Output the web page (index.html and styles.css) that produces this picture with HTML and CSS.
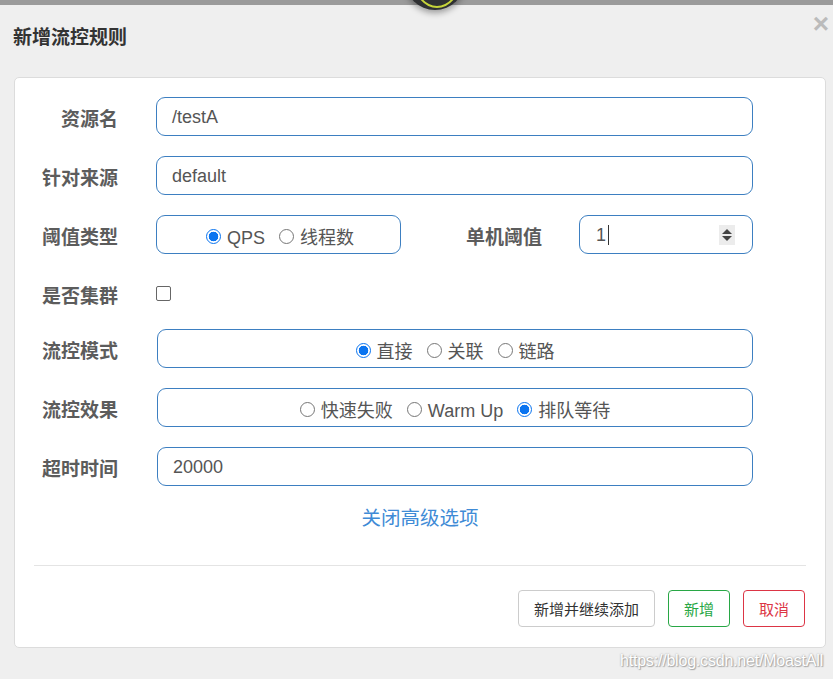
FILE: index.html
```html
<!DOCTYPE html>
<html lang="zh">
<head>
<meta charset="utf-8">
<title>新增流控规则</title>
<link rel="stylesheet" href="styles.css">
</head>
<body>
<div class="topbar"><div class="knob"></div></div>
<div class="header">
  <h4 class="title">新增流控规则</h4>
  <span class="close">×</span>
</div>
<div class="card">
  <form class="form">
    <div class="row">
      <label class="lbl">资源名</label>
      <div class="field"><span class="val">/testA</span></div>
    </div>
    <div class="row">
      <label class="lbl">针对来源</label>
      <div class="field"><span class="val">default</span></div>
    </div>
    <div class="row">
      <label class="lbl">阈值类型</label>
      <div class="split">
        <div class="field radios narrow">
          <span class="opt"><input type="radio" name="t" checked>QPS</span>
          <span class="opt"><input type="radio" name="t">线程数</span>
        </div>
        <label class="lbl lbl2">单机阈值</label>
        <div class="field num">
          <span class="val">1</span><span class="caret"></span>
          <span class="spin"><i class="up"></i><i class="down"></i></span>
        </div>
      </div>
    </div>
    <div class="row row-check">
      <label class="lbl">是否集群</label>
      <div class="checkcell"><input type="checkbox" class="check"></div>
    </div>
    <div class="row">
      <label class="lbl">流控模式</label>
      <div class="field radios shift">
        <span class="opt"><input type="radio" name="m" checked>直接</span>
        <span class="opt"><input type="radio" name="m">关联</span>
        <span class="opt"><input type="radio" name="m">链路</span>
      </div>
    </div>
    <div class="row">
      <label class="lbl">流控效果</label>
      <div class="field radios shift">
        <span class="opt"><input type="radio" name="e">快速失败</span>
        <span class="opt"><input type="radio" name="e">Warm Up</span>
        <span class="opt"><input type="radio" name="e" checked>排队等待</span>
      </div>
    </div>
    <div class="row">
      <label class="lbl">超时时间</label>
      <div class="field shift"><span class="val">20000</span></div>
    </div>
    <div class="linkrow"><a class="link">关闭高级选项</a></div>
  </form>
  <div class="divider"></div>
  <div class="footer">
    <button class="btn btn-default" type="button">新增并继续添加</button>
    <button class="btn btn-success" type="button">新增</button>
    <button class="btn btn-danger" type="button">取消</button>
  </div>
</div>
<div class="watermark">https://blog.csdn.net/MoastAll</div>
</body>
</html>
```
FILE: styles.css
```css
* { box-sizing: border-box; }
html, body { margin: 0; padding: 0; }
body {
  background: #efefef;
  font-family: "Liberation Sans", "Noto Sans CJK SC", sans-serif;
  color: #555;
  width: 833px;
  height: 679px;
  overflow: hidden;
}
.topbar {
  height: 5px;
  background: #9b9b9b;
  position: relative;
}
.knob {
  position: absolute;
  left: 405px;
  top: -50px;
  width: 60px;
  height: 60px;
  border-radius: 50%;
  background: #2f3033;
  box-shadow: 0 3px 6px rgba(0,0,0,0.35);
}
.knob::after {
  content: "";
  position: absolute;
  left: 9px;
  top: 4px;
  width: 42px;
  height: 50px;
  border-radius: 50%;
  border: 2px solid #c6d43a;
}
.header {
  display: flex;
  justify-content: space-between;
  align-items: flex-start;
  height: 72px;
  padding: 0 4px 0 13px;
}
.title {
  margin: 21px 0 0;
  font-size: 19px;
  line-height: 24px;
  font-weight: bold;
  color: #333;
}
.close {
  margin-top: 7px;
  font-size: 28px;
  line-height: 24px;
  font-weight: bold;
  color: #bbb;
}
.card {
  margin: 0 7px 0 14px;
  background: #fff;
  border: 1px solid #dcdcdc;
  border-radius: 5px;
  padding: 19px 19px 19px 19px;
  height: 571px;
}
.form {
  display: flex;
  flex-direction: column;
  gap: 20px;
}
.row {
  display: grid;
  grid-template-columns: 84px 597px;
  column-gap: 38px;
  align-items: center;
  height: 39px;
}
.row-check { height: 35px; margin: 2px 0 -2px; }
.lbl {
  text-align: right;
  font-size: 19px;
  font-weight: bold;
  color: #5c5c5c;
  white-space: nowrap;
  padding-top: 2px;
}
.field {
  height: 39px;
  border: 1px solid #3d7fc1;
  border-radius: 9px;
  display: flex;
  align-items: center;
  padding: 0 15px;
  font-size: 18px;
  color: #555;
}
.shift { margin-left: 1px; }
.val { line-height: 20px; }
.split {
  display: flex;
  align-items: center;
}
.narrow { width: 245px; }
.lbl2 { width: 141px; margin-right: 37px; }
.num {
  width: 174px;
  padding-left: 16px;
  padding-right: 17px;
}
.caret {
  width: 1px;
  height: 20px;
  background: #333;
  margin-left: 2px;
}
.spin {
  margin-left: auto;
  width: 16px;
  height: 20px;
  background: #ececec;
  display: flex;
  flex-direction: column;
  align-items: center;
  justify-content: center;
  gap: 2px;
}
.spin i { display: block; width: 0; height: 0; border-left: 5px solid transparent; border-right: 5px solid transparent; }
.spin .up { border-bottom: 5px solid #444; }
.spin .down { border-top: 5px solid #444; }
.radios {
  justify-content: center;
  gap: 14px;
  padding-top: 6px;
}
.narrow.radios { padding-left: 18px; }
.opt {
  display: flex;
  align-items: center;
  gap: 6px;
  font-size: 18px;
  color: #555;
  line-height: 20px;
}
.opt input {
  appearance: none;
  -webkit-appearance: none;
  margin: 0;
  width: 15px;
  height: 15px;
  border: 1px solid #767676;
  border-radius: 50%;
  background: #fff;
  position: relative;
  top: -1px;
}
.opt input:checked {
  border-color: #0a74f0;
  background: radial-gradient(circle, #0a74f0 0, #0a74f0 4.5px, #fff 5.1px);
}
.checkcell { display: flex; align-items: center; }
.check {
  appearance: none;
  -webkit-appearance: none;
  margin: 0;
  width: 15px;
  height: 15px;
  border: 1px solid #666;
  border-radius: 2px;
  background: #fff;
}
.linkrow {
  text-align: center;
  line-height: 24px;
  margin-top: 0;
}
.link {
  font-size: 19.5px;
  color: #3f8bd6;
  cursor: pointer;
}
.divider {
  height: 1px;
  background: #e4e4e4;
  margin: 33px 0 24px;
}
.footer {
  display: flex;
  justify-content: flex-end;
  gap: 13px;
  padding-right: 1px;
}
.btn {
  height: 37px;
  padding: 0 15px;
  font-family: "Liberation Sans", "Noto Sans CJK SC", sans-serif;
  font-size: 15px;
  background: #fff;
  border-radius: 4px;
  border: 1px solid #ccc;
  color: #333;
}
.btn-success { border-color: #28a745; color: #28a745; }
.btn-danger { border-color: #dc3545; color: #dc3545; }
.watermark {
  text-align: right;
  padding-right: 10px;
  margin-top: 4px;
  font-size: 16px;
  color: #fff;
  text-shadow: 0 0 2px #999, 1px 1px 1px #aaa;
  letter-spacing: -0.2px;
}
```
